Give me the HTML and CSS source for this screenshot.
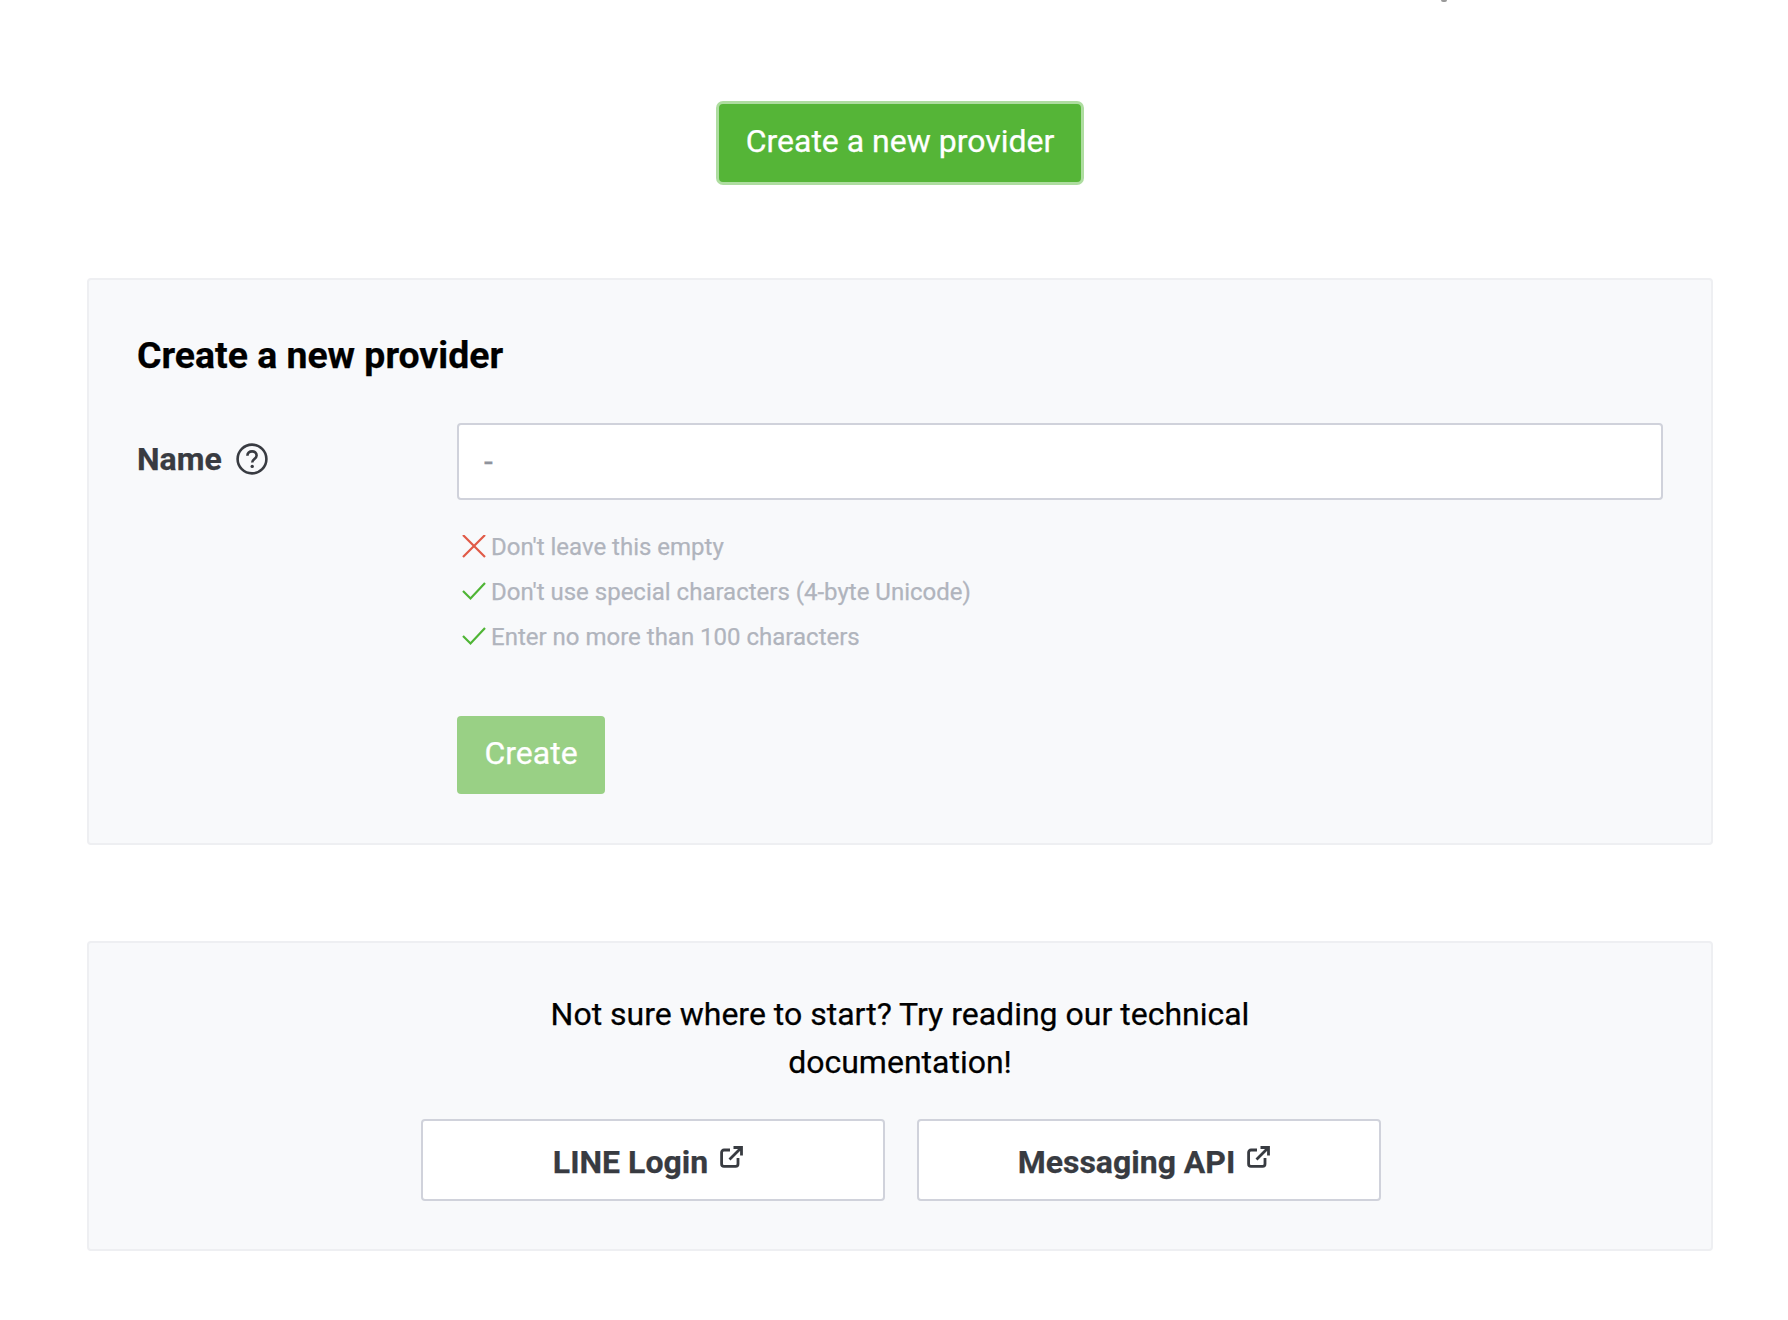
FILE: index.html
```html
<!DOCTYPE html>
<html lang="en">
<head>
<meta charset="utf-8">
<title>Create a new provider</title>
<link rel="stylesheet" href="styles.css">
</head>
<body>
<span class="clipped-mark" aria-hidden="true"></span>
<main class="page">
  <div class="top-action"><button class="btn-primary" type="button">Create a new provider</button></div>

  <section class="panel panel-form">
    <h2 class="panel-title">Create a new provider</h2>
    <div class="field">
      <div class="field-label">
        <span>Name</span>
        <svg class="help-icon" viewBox="0 0 32 32" aria-hidden="true"><circle cx="16" cy="16" r="14.4" fill="none" stroke="#383b41" stroke-width="2.600"/><path d="M11.400 12.800c0-2.800 2-4.400 4.700-4.400s4.500 1.700 4.500 4c0 3.500-4.400 3.500-4.400 7" fill="none" stroke="#383b41" stroke-width="2.600"/><circle cx="16.200" cy="23.400" r="1.700" fill="#383b41"/></svg>
      </div>
      <div class="field-body">
        <input class="text-input" type="text" placeholder="-">
        <ul class="rules">
          <li class="rule"><svg class="rule-icon" viewBox="0 0 24 24" aria-hidden="true"><path d="M1 0l22 22M23 0L1 22" fill="none" stroke="#e05a47" stroke-width="2.200"/></svg><span>Don't leave this empty</span></li>
          <li class="rule"><svg class="rule-icon" viewBox="0 0 24 24" aria-hidden="true"><path d="M1 11l7.500 7.500L23 3" fill="none" stroke="#4fb535" stroke-width="2.200"/></svg><span>Don't use special characters (4-byte Unicode)</span></li>
          <li class="rule"><svg class="rule-icon" viewBox="0 0 24 24" aria-hidden="true"><path d="M1 11l7.500 7.500L23 3" fill="none" stroke="#4fb535" stroke-width="2.200"/></svg><span>Enter no more than 100 characters</span></li>
        </ul>
        <button class="btn-create" type="button">Create</button>
      </div>
    </div>
  </section>

  <section class="panel panel-docs">
    <p class="docs-text">Not sure where to start? Try reading our technical documentation!</p>
    <div class="docs-links">
      <a class="doc-link" href="#">LINE Login<svg class="ext-icon" viewBox="0 0 24 24" aria-hidden="true"><path d="M11 5H5a2.400 2.400 0 0 0-2.400 2.400V19A2.400 2.400 0 0 0 5 21.400h11.600A2.400 2.400 0 0 0 19 19v-6M10.500 14.500L21 4M14.500 2.500h8v8" fill="none" stroke="#383b41" stroke-width="2.800"/></svg></a>
      <a class="doc-link" href="#">Messaging API<svg class="ext-icon" viewBox="0 0 24 24" aria-hidden="true"><path d="M11 5H5a2.400 2.400 0 0 0-2.400 2.400V19A2.400 2.400 0 0 0 5 21.400h11.600A2.400 2.400 0 0 0 19 19v-6M10.500 14.500L21 4M14.500 2.500h8v8" fill="none" stroke="#383b41" stroke-width="2.800"/></svg></a>
    </div>
  </section>
</main>
</body>
</html>
```

FILE: styles.css
```css
* { box-sizing: border-box; }
html, body { margin: 0; background: #fff; }
body { position: relative; font-family: Roboto, "Liberation Sans", sans-serif; color: #000; -webkit-text-stroke: 0.25px; }
.clipped-mark { position: absolute; left: 1441px; top: 0; width: 6px; height: 2px; background: #9a9a9a; border-radius: 0 0 3px 3px; }
.page { padding: 101px 75px 0 87px; display: flex; flex-direction: column; }
.top-action { display: flex; justify-content: center; margin-bottom: 93px; }
.btn-primary {
  width: 368px; height: 84px; padding: 0 0 4px;
  background: #55b537; color: #fff; border: 3px solid #aedda0; border-radius: 7px;
  font: 400 32px Roboto, sans-serif; -webkit-text-stroke: 0.25px; cursor: pointer;
}
.panel { background: #f8f9fb; border: 2px solid #eeeff2; border-radius: 4px; }
.panel-form { height: 567px; padding: 54px 48px 48px 48px; margin-bottom: 96px; }
.panel-title { margin: 0 0 47px; font-size: 37.400px; line-height: 42px; font-weight: 700; color: #000; }
.field { display: flex; }
.field-label { width: 320px; flex: none; display: flex; align-items: center; gap: 14px; height: 72px; font-size: 32px; font-weight: 700; color: #383b41; }
.help-icon { width: 32px; height: 32px; margin-top: -1px; }
.field-body { flex: 1; }
.text-input {
  display: block; width: 100%; height: 77px; padding: 0 25px 2px;
  background: #fff; border: 2px solid #d0d2db; border-radius: 4px;
  font: 400 32px Roboto, sans-serif; color: #383b41;
}
.text-input::placeholder { color: #8f939c; opacity: 1; }
.rules { list-style: none; margin: 24px 0 0; padding: 0 0 0 5px; }
.rule { display: flex; align-items: center; gap: 5px; height: 45px; font-size: 24px; color: #b0b4bd; }
.rule-icon { width: 24px; height: 24px; flex: none; }
.btn-create {
  display: block; margin-top: 57px; width: 148px; height: 78px; padding: 0 0 4px;
  background: #99d085; color: #fff; border: 0; border-radius: 4px;
  font: 400 32px Roboto, sans-serif; -webkit-text-stroke: 0.25px;
}
.panel-docs { height: 310px; padding: 47px 48px 0; display: flex; flex-direction: column; align-items: center; }
.docs-text { margin: 0 0 33px; width: 720px; text-align: center; font-size: 32px; line-height: 48px; color: #000; }
.docs-links { display: flex; gap: 32px; padding-left: 2px; }
.doc-link {
  width: 464px; height: 82px; padding: 4px 10px 0 0; display: flex; align-items: center; justify-content: center; gap: 11px;
  background: #fff; border: 2px solid #d0d2db; border-radius: 4px;
  font-size: 32px; font-weight: 700; color: #383b41; text-decoration: none;
}
.ext-icon { width: 24px; height: 24px; margin-bottom: 10px; }
```
